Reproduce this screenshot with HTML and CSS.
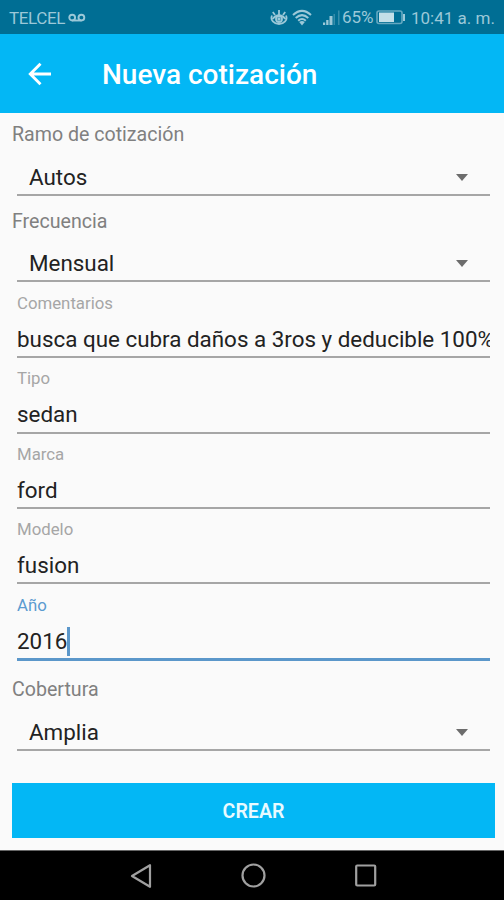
FILE: index.html
```html
<!DOCTYPE html>
<html lang="es">
<head>
<meta charset="utf-8">
<title>Nueva cotización</title>
<link rel="stylesheet" href="styles.css">
</head>
<body>
<div class="status">
  <span class="carrier">TELCEL</span>
  <svg class="voicemail" width="18" height="10" viewBox="0 0 18 10"><g fill="none" stroke="currentColor" stroke-width="1.9"><circle cx="4.2" cy="4.6" r="2.9"/><circle cx="13.4" cy="4.6" r="2.9"/><path d="M4.2 7.5h9.2"/></g></svg>
  <svg class="eye" width="18" height="18" viewBox="0 0 18 18"><g fill="none" stroke="currentColor" stroke-width="1.8"><path d="M2 7.500C0 12 4 16 9 16S18 12 16 7.500"/><path d="M2.500 11Q9 3.500 15.500 11"/><circle cx="9" cy="11" r="3"/><path d="M9 7V2M5 7L2.800 4M13 7L15.200 4"/></g><circle cx="9" cy="11" r="1.700" fill="currentColor"/></svg>
  <svg class="wifi" width="20" height="17" viewBox="0 0 20 17"><g fill="none" stroke="currentColor" stroke-width="2"><path d="M1 6Q10-2.200 19 6"/><path d="M3.700 9Q10 3.200 16.300 9"/><path d="M6.200 11.800Q10 8.200 13.800 11.800"/></g><path d="M7.200 13Q10 11.200 12.800 13L10 16.500Z" fill="currentColor"/></svg>
  <svg class="signal" width="18" height="16" viewBox="0 0 18 16"><path d="M0 12.500h2.200V15H0zM3.200 10h2.300v5H3.200zM6.500 6h3v9h-3z" fill="currentColor"/><path d="M10.500 4H12v11h-1.500zM15 .500h1.500V15H15z" fill="currentColor" opacity=".35"/></svg>
  <span class="percent">65%</span>
  <svg class="battery" width="30" height="15" viewBox="0 0 30 15"><rect x="1" y="1" width="25" height="12.500" rx="2" fill="none" stroke="currentColor" stroke-width="1.600" opacity=".65"/><path d="M3 2.500h15V12H3z" fill="#c3dfe8"/><path d="M27 4h2v7h-2z" fill="currentColor"/></svg>
  <span class="clock">10:41 a. m.</span>
</div>
<header class="appbar">
  <svg class="back" width="24" height="24" viewBox="0 0 24 24"><path d="M23 12H2.500M12.500 1.800L2.300 12l10.200 10.200" fill="none" stroke="currentColor" stroke-width="2.900"/></svg>
  <h1 class="title">Nueva cotización</h1>
</header>
<main class="form">
  <div class="group first">
    <div class="label">Ramo de cotización</div>
    <div class="spinner"><span>Autos</span><i class="caret"></i></div>
  </div>
  <div class="group second">
    <div class="label">Frecuencia</div>
    <div class="spinner"><span>Mensual</span><i class="caret"></i></div>
  </div>
  <div class="field">
    <div class="hint">Comentarios</div>
    <div class="input">busca que cubra daños a 3ros y deducible 100%</div>
  </div>
  <div class="field">
    <div class="hint">Tipo</div>
    <div class="input raised">sedan</div>
  </div>
  <div class="field short">
    <div class="hint">Marca</div>
    <div class="input">ford</div>
  </div>
  <div class="field short">
    <div class="hint">Modelo</div>
    <div class="input">fusion</div>
  </div>
  <div class="field active">
    <div class="hint">Año</div>
    <div class="input">2016<i class="cursor"></i></div>
  </div>
  <div class="group last">
    <div class="label">Cobertura</div>
    <div class="spinner"><span>Amplia</span><i class="caret"></i></div>
  </div>
  <button class="create">CREAR</button>
</main>
<nav class="navbar">
  <svg width="24" height="26" viewBox="0 0 24 26"><path d="M20 2.200v21.600L2 13Z" fill="none" stroke="currentColor" stroke-width="2.200" stroke-linejoin="round"/></svg>
  <svg width="26" height="26" viewBox="0 0 26 26"><circle cx="12.500" cy="12.500" r="11" fill="none" stroke="currentColor" stroke-width="2.200"/></svg>
  <svg width="24" height="26" viewBox="0 0 24 26"><rect x="2.200" y="2.500" width="19" height="20" rx="1" fill="none" stroke="currentColor" stroke-width="2.200"/></svg>
</nav>
</body>
</html>
```
FILE: styles.css
```css
* { box-sizing: border-box; }
body {
  margin: 0;
  width: 504px;
  height: 900px;
  display: flex;
  flex-direction: column;
  overflow: hidden;
  background: #fafafa;
  font-family: Roboto, sans-serif;
}
svg { display: block; flex: none; }
.status {
  height: 34px;
  flex: none;
  display: flex;
  align-items: center;
  padding: 2px 9px 0;
  background: #006e94;
  color: #9bc8d8;
  font-size: 17px;
  white-space: nowrap;
}
.carrier { width: 56px; letter-spacing: -0.4px; }
.voicemail { margin-left: 3px; }
.eye { margin-left: 184px; margin-top: -3px; }
.wifi { margin-left: 4px; margin-top: -2px; }
.signal { margin-left: 11px; }
.percent { margin: -2px 0 0 1px; width: 32px; }
.battery { margin-left: 2px; margin-top: -2px; }
.clock { margin-left: 5px; }
.appbar {
  height: 79px;
  flex: none;
  display: flex;
  align-items: center;
  padding-left: 28px;
  background: #03b7f5;
  color: #fff;
}
.title {
  margin: 2px 0 0 50px;
  font-size: 28px;
  font-weight: 500;
  line-height: 36px;
}
.form {
  height: 737px;
  flex: none;
  padding: 0 9px 0 12px;
  display: flex;
  flex-direction: column;
}
.group, .field {
  flex: none;
  display: flex;
  flex-direction: column;
  justify-content: flex-end;
}
.first { height: 83px; }
.second { height: 86px; }
.last { height: 90px; }
.field { height: 76px; margin: 0 5px; }
.field.short { height: 75px; }
.field.active { height: 77px; }
.label {
  margin-bottom: 16px;
  font-size: 19.6px;
  line-height: 24px;
  color: #808080;
}
.second .label { margin-bottom: 15px; }
.spinner {
  display: flex;
  align-items: center;
  justify-content: space-between;
  margin: 0 5px;
  padding: 0 22px 3px 12px;
  border-bottom: 2px solid #a6a6a6;
  font-size: 22.4px;
  line-height: 28px;
  color: #222;
}
.caret {
  border: 6px solid transparent;
  border-top: 7px solid #6c6c6c;
  border-bottom: 0;
}
.hint {
  margin-bottom: 12px;
  font-size: 16.8px;
  line-height: 20px;
  color: #a6a6a6;
}
.input {
  display: flex;
  align-items: center;
  padding-bottom: 3px;
  border-bottom: 2px solid #a6a6a6;
  overflow: hidden;
  white-space: nowrap;
  font-size: 22.4px;
  line-height: 28px;
  color: #222;
}
.raised { padding-bottom: 4px; }
.active .hint { color: #5b9bd0; }
.active .input { border-bottom: 3px solid #5b97ca; }
.cursor { width: 3px; height: 30px; margin: -1px 0; background: #5b97ca; }
.create {
  flex: none;
  height: 55px;
  margin-top: 32px;
  padding: 2px 0 0;
  border: 0;
  background: #03b7f5;
  color: #e8faff;
  font: 600 19.6px Roboto, sans-serif;
}
.navbar {
  height: 50px;
  flex: none;
  display: flex;
  align-items: center;
  gap: 87px;
  padding-left: 130px;
  background: #000;
  border-top: 1px solid #666;
  color: #a0a0a0;
}
```
